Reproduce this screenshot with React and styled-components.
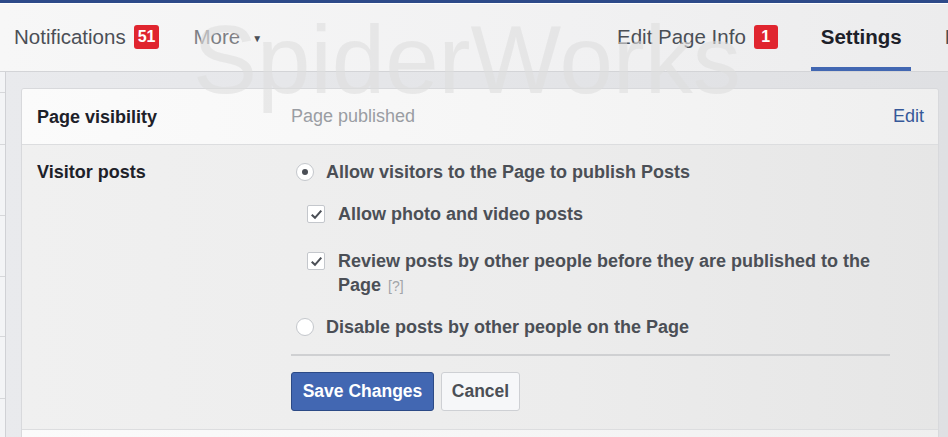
import React from 'react'
import styled, { createGlobalStyle } from 'styled-components'

const Global = createGlobalStyle`
  html, body {
    margin: 0;
    padding: 0;
  }
  body {
    font-family: "Liberation Sans", Arial, sans-serif;
    background: #e5e6e9;
  }
`

// page frame
const Page = styled.div`
  position: relative;
  width: 948px;
  height: 437px;
  overflow: hidden;
  background: linear-gradient(to right, #e9eaed, #dfe0e3);
`

const Watermark = styled.div`
  position: absolute;
  left: 193px;
  top: 12px;
  font-size: 96px;
  line-height: 1;
  color: rgba(222, 222, 222, 0.6);
  pointer-events: none;
  z-index: 5;
`

// top nav
const TopBar = styled.div`
  display: flex;
  height: 68px;
  border-top: 3px solid #2d4a89;
  border-bottom: 1px solid #d3d4d7;
  background: linear-gradient(to right, #f7f7f7, #f1f1f2 60%, #ececed);
  box-shadow: inset 0 1px 0 #ffffff;
`

const NavLeft = styled.div`
  flex: 0 0 617px;
  display: flex;
  align-items: center;
  padding-left: 14px;
  box-sizing: border-box;
`

const NavRight = styled.div`
  display: flex;
  align-items: stretch;
  white-space: nowrap;
`

const NavItem = styled.div`
  display: flex;
  align-items: center;
  font-size: 20.5px;
  color: ${p => (p.$muted ? '#7d7f84' : '#4b4f56')};
  margin-left: ${p => p.$gap || 0}px;
`

const Tab = styled.div`
  display: flex;
  align-items: center;
  box-sizing: border-box;
  padding: 4px 9px 0 10px;
  margin-left: ${p => p.$gap || 0}px;
  font-size: 20.5px;
  font-weight: ${p => (p.$active ? 700 : 400)};
  color: ${p => (p.$active ? '#1d2129' : '#4b4f56')};
  border-bottom: 4px solid ${p => (p.$active ? '#4267b2' : 'transparent')};
  min-width: ${p => p.$width || 0}px;
`

const Badge = styled.span`
  display: inline-flex;
  align-items: center;
  justify-content: center;
  min-width: 24px;
  height: 24px;
  padding: 0 4px;
  box-sizing: border-box;
  margin-left: 8px;
  border-radius: 3px;
  background: #e0252f;
  color: #fff;
  font-size: 16px;
  font-weight: 700;
`

const Caret = styled.span`
  font-size: 10px;
  color: #4b4f56;
  margin-left: 12px;
  margin-top: 2px;
`

// body
const Body = styled.div`
  display: flex;
  height: 368px;
`

const Sidebar = styled.div`
  flex: 0 0 5px;
  background: #f3f4f6;
  border-right: 1px solid #d0d1d5;
`

const SideRow = styled.div`
  border-bottom: 1px solid #d6d7da;
`

const CardWrap = styled.div`
  flex: 1;
  padding: 16px 9px 0 15px;
`

const Card = styled.div`
  border: 1px solid #d8d9dc;
  border-radius: 3px 3px 0 0;
  overflow: hidden;
`

const Row = styled.div`
  display: grid;
  grid-template-columns: 254px 1fr;
  padding: ${p => (p.$head ? '0 14px 0 15px' : '15px 14px 18px 15px')};
  min-height: ${p => (p.$head ? '55px' : 'auto')};
  align-items: ${p => (p.$head ? 'center' : 'start')};
  background: ${p =>
    p.$head
      ? 'linear-gradient(to right, #fbfbfb, #f5f5f5 60%, #efefef)'
      : 'linear-gradient(to right, #f0f0f0, #ececec 60%, #e6e6e6)'};
  border-bottom: 1px solid #dcdddf;
  font-size: 18px;
`

const RowTitle = styled.div`
  font-weight: 700;
  color: #1d2129;
  line-height: 24px;
`

const HeadValue = styled.div`
  display: flex;
  justify-content: space-between;
  align-items: center;
`

const Muted = styled.span`
  color: #9a9da3;
`

const EditLink = styled.span`
  color: #365899;
`

const Options = styled.div`
  display: flex;
  flex-direction: column;
`

const Option = styled.label`
  display: flex;
  align-items: flex-start;
  margin-top: ${p => p.$top || 0}px;
  margin-left: ${p => p.$indent || 0}px;
  font-weight: 700;
  color: #4b4f56;
  line-height: 24px;
`

const OptionText = styled.span`
  max-width: 545px;
`

const Radio = styled.span`
  flex: 0 0 auto;
  width: 16px;
  height: 16px;
  margin: 3px 12px 0 5px;
  border: 1px solid #c4c7cc;
  border-radius: 50%;
  background: #fff;
  display: flex;
  align-items: center;
  justify-content: center;
  &::after {
    content: '';
    width: 6px;
    height: 6px;
    border-radius: 50%;
    background: ${p => (p.$on ? '#4b4f56' : 'transparent')};
  }
`

const Check = styled.span`
  flex: 0 0 auto;
  width: 16px;
  height: 16px;
  margin: 3px 13px 0 0;
  border: 1px solid #c4c7cc;
  border-radius: 2px;
  background: #fff;
  display: flex;
  align-items: center;
  justify-content: center;
`

const Help = styled.span`
  font-weight: 400;
  font-size: 14px;
  color: #a2a4a8;
  margin-left: 7px;
`

const Divider = styled.div`
  width: 599px;
  height: 2px;
  background: #cfd0d2;
  margin-top: 15px;
`

const Buttons = styled.div`
  display: flex;
  gap: 7px;
  margin-top: 16px;
`

const Button = styled.button`
  height: 39px;
  width: ${p => p.$width}px;
  padding: 0;
  border-radius: 3px;
  border: 1px solid ${p => (p.$primary ? '#2c4a86' : '#ced0d4')};
  background: ${p => (p.$primary ? '#4267b2' : '#f6f7f9')};
  color: ${p => (p.$primary ? '#ffffff' : '#4b4f56')};
  font-family: "Liberation Sans", Arial, sans-serif;
  font-size: 17.5px;
  font-weight: 700;
`

const CheckMark = () => (
  <svg width="13" height="13" viewBox="0 0 12 12">
    <path d="M1.6 6.2 L4.6 9.1 L10.4 2.4" fill="none" stroke="#4b4f56" strokeWidth="1.9" />
  </svg>
)

const sideRows = [20, 51, 70, 60, 59, 61, 60]

export default function App() {
  return (
    <Page>
      <Global />
      <Watermark>SpiderWorks</Watermark>
      <TopBar>
        <NavLeft>
          <NavItem>
            Notifications<Badge>51</Badge>
          </NavItem>
          <NavItem $muted $gap={34}>
            More<Caret>▼</Caret>
          </NavItem>
        </NavLeft>
        <NavRight>
          <NavItem>
            Edit Page Info<Badge>1</Badge>
          </NavItem>
          <Tab $active $gap={33} $width={100}>Settings</Tab>
          <Tab $gap={24}>Publishing Tools</Tab>
        </NavRight>
      </TopBar>
      <Body>
        <Sidebar>
          {sideRows.map((h, i) => (
            <SideRow key={i} style={{ height: h }} />
          ))}
        </Sidebar>
        <CardWrap>
          <Card>
            <Row $head>
              <RowTitle>Page visibility</RowTitle>
              <HeadValue>
                <Muted>Page published</Muted>
                <EditLink>Edit</EditLink>
              </HeadValue>
            </Row>
            <Row>
              <RowTitle>Visitor posts</RowTitle>
              <Options>
                <Option>
                  <Radio $on />
                  <OptionText>Allow visitors to the Page to publish Posts</OptionText>
                </Option>
                <Option $top={18} $indent={16}>
                  <Check><CheckMark /></Check>
                  <OptionText>Allow photo and video posts</OptionText>
                </Option>
                <Option $top={23} $indent={16}>
                  <Check><CheckMark /></Check>
                  <OptionText>
                    Review posts by other people before they are published to the Page
                    <Help>[?]</Help>
                  </OptionText>
                </Option>
                <Option $top={17}>
                  <Radio />
                  <OptionText>Disable posts by other people on the Page</OptionText>
                </Option>
                <Divider />
                <Buttons>
                  <Button $primary $width={143}>Save Changes</Button>
                  <Button $width={79}>Cancel</Button>
                </Buttons>
              </Options>
            </Row>
            <Row $head />
          </Card>
        </CardWrap>
      </Body>
    </Page>
  )
}
